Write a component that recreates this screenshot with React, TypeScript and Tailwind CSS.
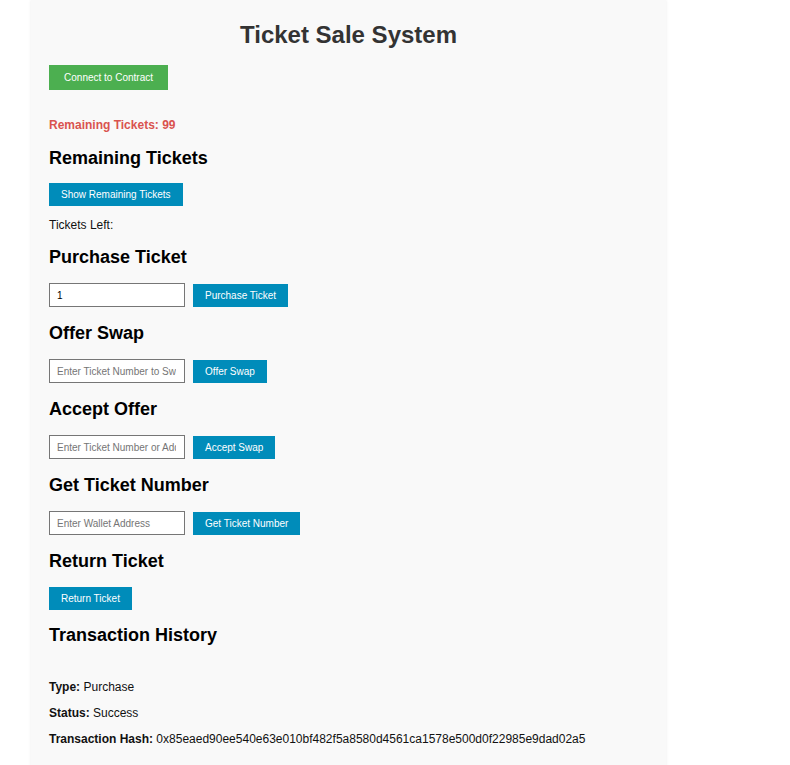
import React from "react";

const H2 = ({ children, mt = "mt-[16px]" }: { children: React.ReactNode; mt?: string }) => (
  <h2 className={`text-[18px] leading-[21px] font-bold text-black ${mt}`}>{children}</h2>
);

const Btn = ({ children }: { children: React.ReactNode }) => (
  <button className="bg-[#008CBA] text-white text-[10px] leading-[11px] h-[23px] px-[12px] whitespace-nowrap">
    {children}
  </button>
);

const Row = ({ placeholder, value, label }: { placeholder?: string; value?: string; label: string }) => (
  <div className="flex items-center gap-[8px] mt-[15px] h-[24px]">
    <input
      readOnly
      defaultValue={value}
      placeholder={placeholder}
      className="w-[136px] h-[24px] border border-[#767676] bg-white pl-[7px] pr-[8px] text-[10px] text-black placeholder:text-[#757575] outline-none"
    />
    <Btn>{label}</Btn>
  </div>
);

export default function App() {
  return (
    <div className="bg-white w-[790px] h-[765px] overflow-hidden" style={{ fontFamily: '"Liberation Sans", Arial, sans-serif' }}>
      <div className="ml-[31px] w-[635px] h-[800px] bg-[#f9f9f9] shadow-[0_0_3px_rgba(0,0,0,0.08)] px-[18px] pt-[21px] flex flex-col items-start">
        <h1 className="self-stretch text-[24px] leading-[28px] font-bold text-[#333] text-center">Ticket Sale System</h1>
        <button className="mt-[16px] bg-[#4CAF50] text-white text-[10px] h-[25px] w-[119px] whitespace-nowrap">
          Connect to Contract
        </button>
        <p className="mt-[28px] text-[12px] leading-[14px] font-bold text-[#d9534f]">Remaining Tickets: 99</p>
        <H2 mt="mt-[16px]">Remaining Tickets</H2>
        <div className="mt-[14px] flex">
          <Btn>Show Remaining Tickets</Btn>
        </div>
        <p className="mt-[12px] text-[12px] leading-[14px] text-[#111]">Tickets Left:</p>
        <H2 mt="mt-[15px]">Purchase Ticket</H2>
        <Row value="1" label="Purchase Ticket" />
        <H2>Offer Swap</H2>
        <Row placeholder="Enter Ticket Number to Swap" label="Offer Swap" />
        <H2>Accept Offer</H2>
        <Row placeholder="Enter Ticket Number or Address" label="Accept Swap" />
        <H2>Get Ticket Number</H2>
        <Row placeholder="Enter Wallet Address" label="Get Ticket Number" />
        <H2>Return Ticket</H2>
        <div className="mt-[15px] flex">
          <Btn>Return Ticket</Btn>
        </div>
        <H2 mt="mt-[15px]">Transaction History</H2>
        <div className="mt-[34px] text-[12px] leading-[14px] text-[#111] flex flex-col gap-[12px]">
          <p><span className="font-bold">Type:</span> Purchase</p>
          <p><span className="font-bold">Status:</span> Success</p>
          <p><span className="font-bold">Transaction Hash:</span> 0x85eaed90ee540e63e010bf482f5a8580d4561ca1578e500d0f22985e9dad02a5</p>
        </div>
      </div>
    </div>
  );
}
